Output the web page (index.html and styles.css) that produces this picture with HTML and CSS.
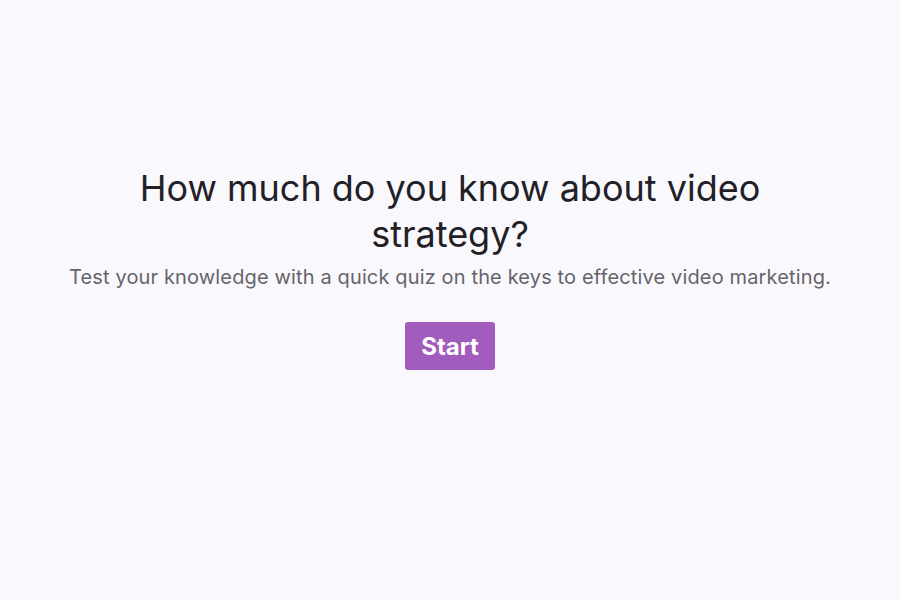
FILE: index.html
```html
<!DOCTYPE html>
<html lang="en">
<head>
<meta charset="utf-8">
<title>Video strategy quiz</title>
<link rel="stylesheet" href="styles.css">
</head>
<body>
<main class="intro">
  <h1 class="title">How much do you know about video strategy?</h1>
  <p class="subtitle">Test your knowledge with a quick quiz on the keys to effective video marketing.</p>
  <button class="start">Start</button>
</main>
</body>
</html>
```

FILE: styles.css
```css
html, body {
  margin: 0;
  padding: 0;
  height: 100%;
}
body {
  background: #f9f8fc;
  font-family: Inter, "Noto Sans", sans-serif;
  color: #222026;
}
.intro {
  display: flex;
  flex-direction: column;
  align-items: center;
  text-align: center;
  padding-top: 165px;
}
.title {
  margin: 0;
  max-width: 660px;
  font-size: 36px;
  font-weight: 400;
  line-height: 46px;
  color: #222026;
}
.subtitle {
  margin: 7px 0 0;
  font-size: 20px;
  line-height: 26px;
  letter-spacing: 0.14px;
  color: #66646b;
}
.start {
  margin-top: 32px;
  width: 90px;
  height: 48px;
  border: none;
  border-radius: 3px;
  background: #a25cbd;
  color: #ffffff;
  font-family: Inter, "Noto Sans", sans-serif;
  font-size: 24px;
  font-weight: 700;
  cursor: pointer;
}
```
